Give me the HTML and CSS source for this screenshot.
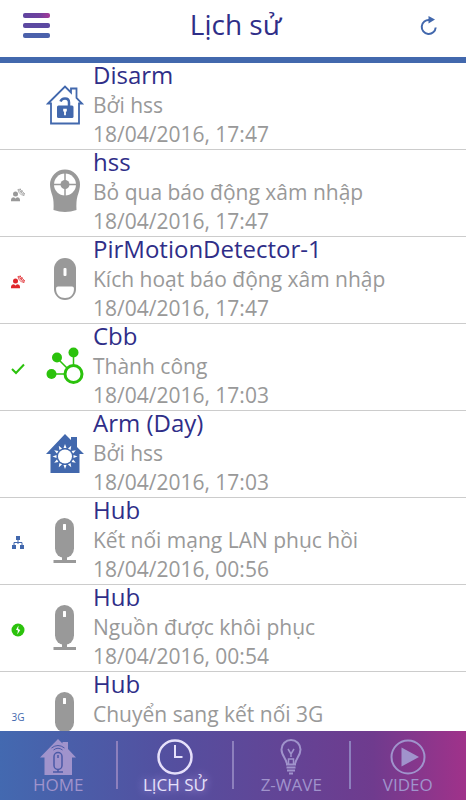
FILE: index.html
```html
<!DOCTYPE html>
<html lang="vi">
<head>
<meta charset="utf-8">
<meta name="viewport" content="width=device-width, initial-scale=1">
<title>Lịch sử</title>
<link rel="stylesheet" href="styles.css">
</head>
<body>
<svg class="defs" aria-hidden="true">
  <defs>
    <linearGradient id="menu-top" x1="0" x2="1" y1="0" y2="0"><stop offset="0" stop-color="#5f45a0"/><stop offset=".6" stop-color="#70419e"/><stop offset="1" stop-color="#a63a98"/></linearGradient>
    <symbol id="hub" viewBox="0 0 40 48">
      <rect x="10" y="1" width="19" height="40" rx="9.5" fill="#999"/>
      <rect x="17" y="38" width="5" height="6" fill="#999"/>
      <rect x="8.500" y="43" width="22.500" height="3" fill="#999"/>
      <rect x="18" y="7" width="3" height="6" rx=".5" fill="#fff"/>
    </symbol>
    <symbol id="intruder" viewBox="0 0 14 14">
      <circle cx="4.5" cy="6" r="2.5" fill="currentColor"/>
      <path d="M0 13.2V12Q0 9.4 3 9.2L4.5 10.4 6 9.2Q9 9.4 9 12V13.2Z" fill="currentColor"/>
      <path d="M7 1.5 13 7.5M9 1 13.6 5.600M7 1.500Q7.500 6.500 13 7.500M9 1Q8.600 5 13.600 5.600M7 1.500 10 1M10 4 11.600 2.400M12.800 7.500 13.500 5.500" fill="none" stroke="currentColor" stroke-width=".7"/>
    </symbol>
  </defs>
</svg>
<div class="app">
  <header class="top">
    <button class="icon-btn" type="button" aria-label="Menu">
      <svg width="28" height="26" viewBox="0 0 28 26">
        <rect x="0" y="0" width="27" height="5" rx="2" fill="url(#menu-top)"/>
        <rect x="0" y="10" width="27" height="5" rx="2" fill="#5c49a1"/>
        <rect x="0" y="20" width="27" height="5" rx="2" fill="#4b61ab"/>
      </svg>
    </button>
    <h1>Lịch sử</h1>
    <button class="icon-btn" type="button" aria-label="Làm mới">
      <svg width="18" height="20" viewBox="0 0 18 20">
        <path d="M9.500 4A7 7 0 1 0 15.700 11.500" fill="none" stroke="#4268ad" stroke-width="2"/>
        <path d="M8.500 0 15 3.600 8.500 7.500Z" fill="#4268ad"/>
      </svg>
    </button>
  </header>

  <main>
    <ul class="log">
      <li>
        <span class="status"></span>
        <svg class="device" viewBox="0 0 40 48">
          <path d="M3 21.500 20 4.500 26 10.500V6.500H31.500V16L37 21.500H34V41.500H6V21.500Z" fill="#fff" stroke="#4268ad" stroke-width="1.800"/>
          <rect x="12" y="23.500" width="16.500" height="12.500" rx="1.500" fill="#4268ad"/>
          <path d="M24 24V20.500Q24 16.500 20 16.500 16.500 16.500 15.500 19.500" fill="none" stroke="#4268ad" stroke-width="2.500"/>
          <path d="M18.200 26.800H21.800V29.500H20.900V33.300H19.100V29.500H18.200Z" fill="#fff"/>
        </svg>
        <div class="entry"><h2>Disarm</h2><p>Bởi hss</p><time datetime="2016-04-18T17:47">18/04/2016, 17:47</time></div>
      </li>
      <li>
        <span class="status muted"><svg width="14" height="14"><use href="#intruder"/></svg></span>
        <svg class="device" viewBox="0 0 40 48">
          <path d="M5 15.500A15 15 0 0 1 35 15.500Q35 20 32.500 27 31 32 31.500 41 20 45 8.500 41 9 32 7.500 27 5 20 5 15.500Z" fill="#999"/>
          <circle cx="20" cy="15.500" r="11" fill="#fff"/>
          <path d="M20 4V27M9 15.500H31" stroke="#999" stroke-width="1.500"/>
          <circle cx="20" cy="15.500" r="4.500" fill="#999"/>
        </svg>
        <div class="entry"><h2>hss</h2><p>Bỏ qua báo động xâm nhập</p><time datetime="2016-04-18T17:47">18/04/2016, 17:47</time></div>
      </li>
      <li>
        <span class="status alert"><svg width="14" height="14"><use href="#intruder"/></svg></span>
        <svg class="device" viewBox="0 0 40 48">
          <rect x="9" y="2" width="22" height="42" rx="11" fill="#999"/>
          <rect x="18.500" y="12" width="3" height="8" rx="1" fill="#fff"/>
          <path d="M13 30.500H27Q29 30.500 29 32.500C29 39 25 42 20 42S11 39 11 32.500Q11 30.500 13 30.500Z" fill="#fff"/>
        </svg>
        <div class="entry"><h2>PirMotionDetector-1</h2><p>Kích hoạt báo động xâm nhập</p><time datetime="2016-04-18T17:47">18/04/2016, 17:47</time></div>
      </li>
      <li>
        <span class="status"><svg width="14" height="12"><path d="M1 6 5 10 13 1.500" fill="none" stroke="#2bc20c" stroke-width="2"/></svg></span>
        <svg class="device" viewBox="0 0 40 48">
          <g fill="#2bc20c"><circle cx="28.500" cy="9.500" r="5"/><circle cx="12" cy="14.500" r="5"/><circle cx="6.500" cy="31" r="5"/></g>
          <path d="M28.500 10V24M12 15 22 25M6.500 31H20" stroke="#2bc20c" stroke-width="1.500"/>
          <circle cx="28.500" cy="31" r="8.500" fill="#fff" stroke="#2bc20c" stroke-width="3"/>
        </svg>
        <div class="entry"><h2>Cbb</h2><p>Thành công</p><time datetime="2016-04-18T17:03">18/04/2016, 17:03</time></div>
      </li>
      <li>
        <span class="status"></span>
        <svg class="device" viewBox="0 0 40 48">
          <path d="M1 24 20 4 26 10V7H32V17L39 24H34.500V43H5.500V24Z" fill="#4268ad"/>
          <g transform="translate(20 26.500)">
            <g fill="#fff"><path id="ray" d="M-1.500-8.500 0-12.500 1.500-8.500Z"/>
              <use href="#ray" transform="rotate(30)"/><use href="#ray" transform="rotate(60)"/><use href="#ray" transform="rotate(90)"/><use href="#ray" transform="rotate(120)"/><use href="#ray" transform="rotate(150)"/><use href="#ray" transform="rotate(180)"/><use href="#ray" transform="rotate(210)"/><use href="#ray" transform="rotate(240)"/><use href="#ray" transform="rotate(270)"/><use href="#ray" transform="rotate(300)"/><use href="#ray" transform="rotate(330)"/>
            </g>
            <circle r="7" fill="#fff"/>
          </g>
        </svg>
        <div class="entry"><h2>Arm (Day)</h2><p>Bởi hss</p><time datetime="2016-04-18T17:03">18/04/2016, 17:03</time></div>
      </li>
      <li>
        <span class="status"><svg width="12" height="13" fill="#4268ad"><path d="M4 0H8V4H4ZM0 9H4V13H0ZM8 9H12V13H8Z"/><path d="M6 4V7M2 9V6.500H10V9M6 6V8" fill="none" stroke="#4268ad"/></svg></span>
        <svg class="device"><use href="#hub"/></svg>
        <div class="entry"><h2>Hub</h2><p>Kết nối mạng LAN phục hồi</p><time datetime="2016-04-18T00:56">18/04/2016, 00:56</time></div>
      </li>
      <li>
        <span class="status"><svg width="14" height="14"><circle cx="7" cy="7" r="6.500" fill="#2bc20c"/><path d="M7.500 2.500 5 6.800 7 7.600 6.200 11.500 9.300 6.900 7.200 6.100Z" fill="#fff"/></svg></span>
        <svg class="device"><use href="#hub"/></svg>
        <div class="entry"><h2>Hub</h2><p>Nguồn được khôi phục</p><time datetime="2016-04-18T00:54">18/04/2016, 00:54</time></div>
      </li>
      <li>
        <span class="status network">3G</span>
        <svg class="device"><use href="#hub"/></svg>
        <div class="entry"><h2>Hub</h2><p>Chuyển sang kết nối 3G</p></div>
      </li>
    </ul>
  </main>

  <nav class="tabs">
    <a href="#home">
      <svg width="36" height="36" viewBox="0 0 36 36">
        <path d="M0 18.500 18 0 22.500 4.500V3H28V10L36 18.500H32V36H4.500V18.500Z" fill="currentColor"/>
        <g fill="none" stroke="#4b5aa6"><path d="M11.500 9Q18 4 24.500 9M13.500 11Q18 7.500 22.500 11"/><rect x="14" y="13.500" width="8" height="17" rx="4" stroke-width="1.500"/><path d="M18 16V19M13 33H23M18 31V33" stroke-width="1.500"/></g>
      </svg>
      <span>HOME</span>
    </a>
    <a href="#history" class="active" aria-current="page">
      <svg width="36" height="36" viewBox="0 0 36 36" fill="none" stroke="currentColor" stroke-width="2.500"><circle cx="18" cy="18" r="16.500"/><path d="M18 6V18H25.500" stroke-width="2"/></svg>
      <span>LỊCH SỬ</span>
    </a>
    <a href="#zwave">
      <svg width="36" height="36" viewBox="0 0 36 36" fill="none" stroke="currentColor" stroke-width="2"><path d="M14 25.500C14 20 8.500 17 8.500 10.500A9.500 9.500 0 0 1 27.500 10.500C27.500 17 22 20 22 25.500Z"/><path d="M15 10 18 15 21 10M18 15V18M15.500 25V20H20.500V25" stroke-width="1.500"/><path d="M13.500 28.500H22.500M14 31.500H22M16 34.500H20" stroke-width="1.800"/></svg>
      <span>Z-WAVE</span>
    </a>
    <a href="#video">
      <svg width="36" height="36" viewBox="0 0 36 36"><circle cx="18" cy="18" r="16.500" fill="none" stroke="currentColor" stroke-width="2"/><path d="M11.500 8.500 29 18 11.500 27.500Z" fill="currentColor"/></svg>
      <span>VIDEO</span>
    </a>
  </nav>
</div>
</body>
</html>
```

FILE: styles.css
```css
* { box-sizing: border-box; }

body {
  margin: 0;
  background: #fff;
  color: #999;
  font-family: "Open Sans", "Noto Sans", sans-serif;
}

.defs { position: absolute; width: 0; height: 0; }

.app {
  display: flex;
  flex-direction: column;
  height: 100vh;
}

.top {
  flex: none;
  display: flex;
  align-items: center;
  justify-content: space-between;
  padding: 4px 24px 13px 19px;
  border-bottom: 6px solid #4268ad;
}

.top h1 {
  margin: 0;
  font-size: 28px;
  font-weight: 400;
  line-height: 38px;
  color: #2f2e88;
}

.icon-btn {
  display: flex;
  padding: 9px 4px 5px;
  border: 0;
  background: none;
}

.icon-btn svg { display: block; }

/* The padding keeps ascenders in the first row clear of the clipping edge. */
main {
  flex: 1;
  min-height: 0;
  margin-top: -6px;
  padding-top: 6px;
  overflow: hidden;
}

.log {
  margin: 0;
  padding: 0;
  list-style: none;
}

.log li {
  display: grid;
  grid-template-columns: 36px 57px 1fr;
  align-items: center;
  min-height: 86px;
}

.log li + li {
  min-height: 87px;
  border-top: 1px solid #ccc;
}

.status {
  display: flex;
  justify-content: center;
  padding-top: 3px;
}

.muted { color: #999; }
.alert { color: #e0262b; }
.network { color: #4268ad; font-size: 10px; line-height: 14px; }

.device {
  width: 40px;
  height: 48px;
  justify-self: center;
}

.entry {
  align-self: start;
  white-space: nowrap;
}

.entry h2 {
  margin: 0 0 4px;
  font-size: 24px;
  font-weight: 400;
  line-height: 24px;
  color: #2f2e88;
}

.entry p,
.entry time {
  display: block;
  margin: 0;
  font-size: 21px;
  line-height: 29px;
}

.tabs {
  flex: none;
  display: grid;
  grid-template-columns: repeat(4, 1fr);
  height: 69px;
  padding-top: 8px;
  background: linear-gradient(90deg, #4369b0 0%, #5350a0 35%, #5f4798 55%, #6f3b8e 80%, #a0328a 100%);
}

.tabs a {
  position: relative;
  display: flex;
  flex-direction: column;
  align-items: center;
  height: 50px;
  color: #a093cc;
  font-size: 17px;
  line-height: 20px;
  text-decoration: none;
}

.tabs a + a::before {
  content: "";
  position: absolute;
  top: 2px;
  bottom: 0;
  left: -1px;
  width: 2px;
  background: #8d80bd;
}

.tabs svg { flex: none; }
.tabs .active { color: #e6e0fa; text-shadow: 0 0 8px #b9a5ee; }
```
